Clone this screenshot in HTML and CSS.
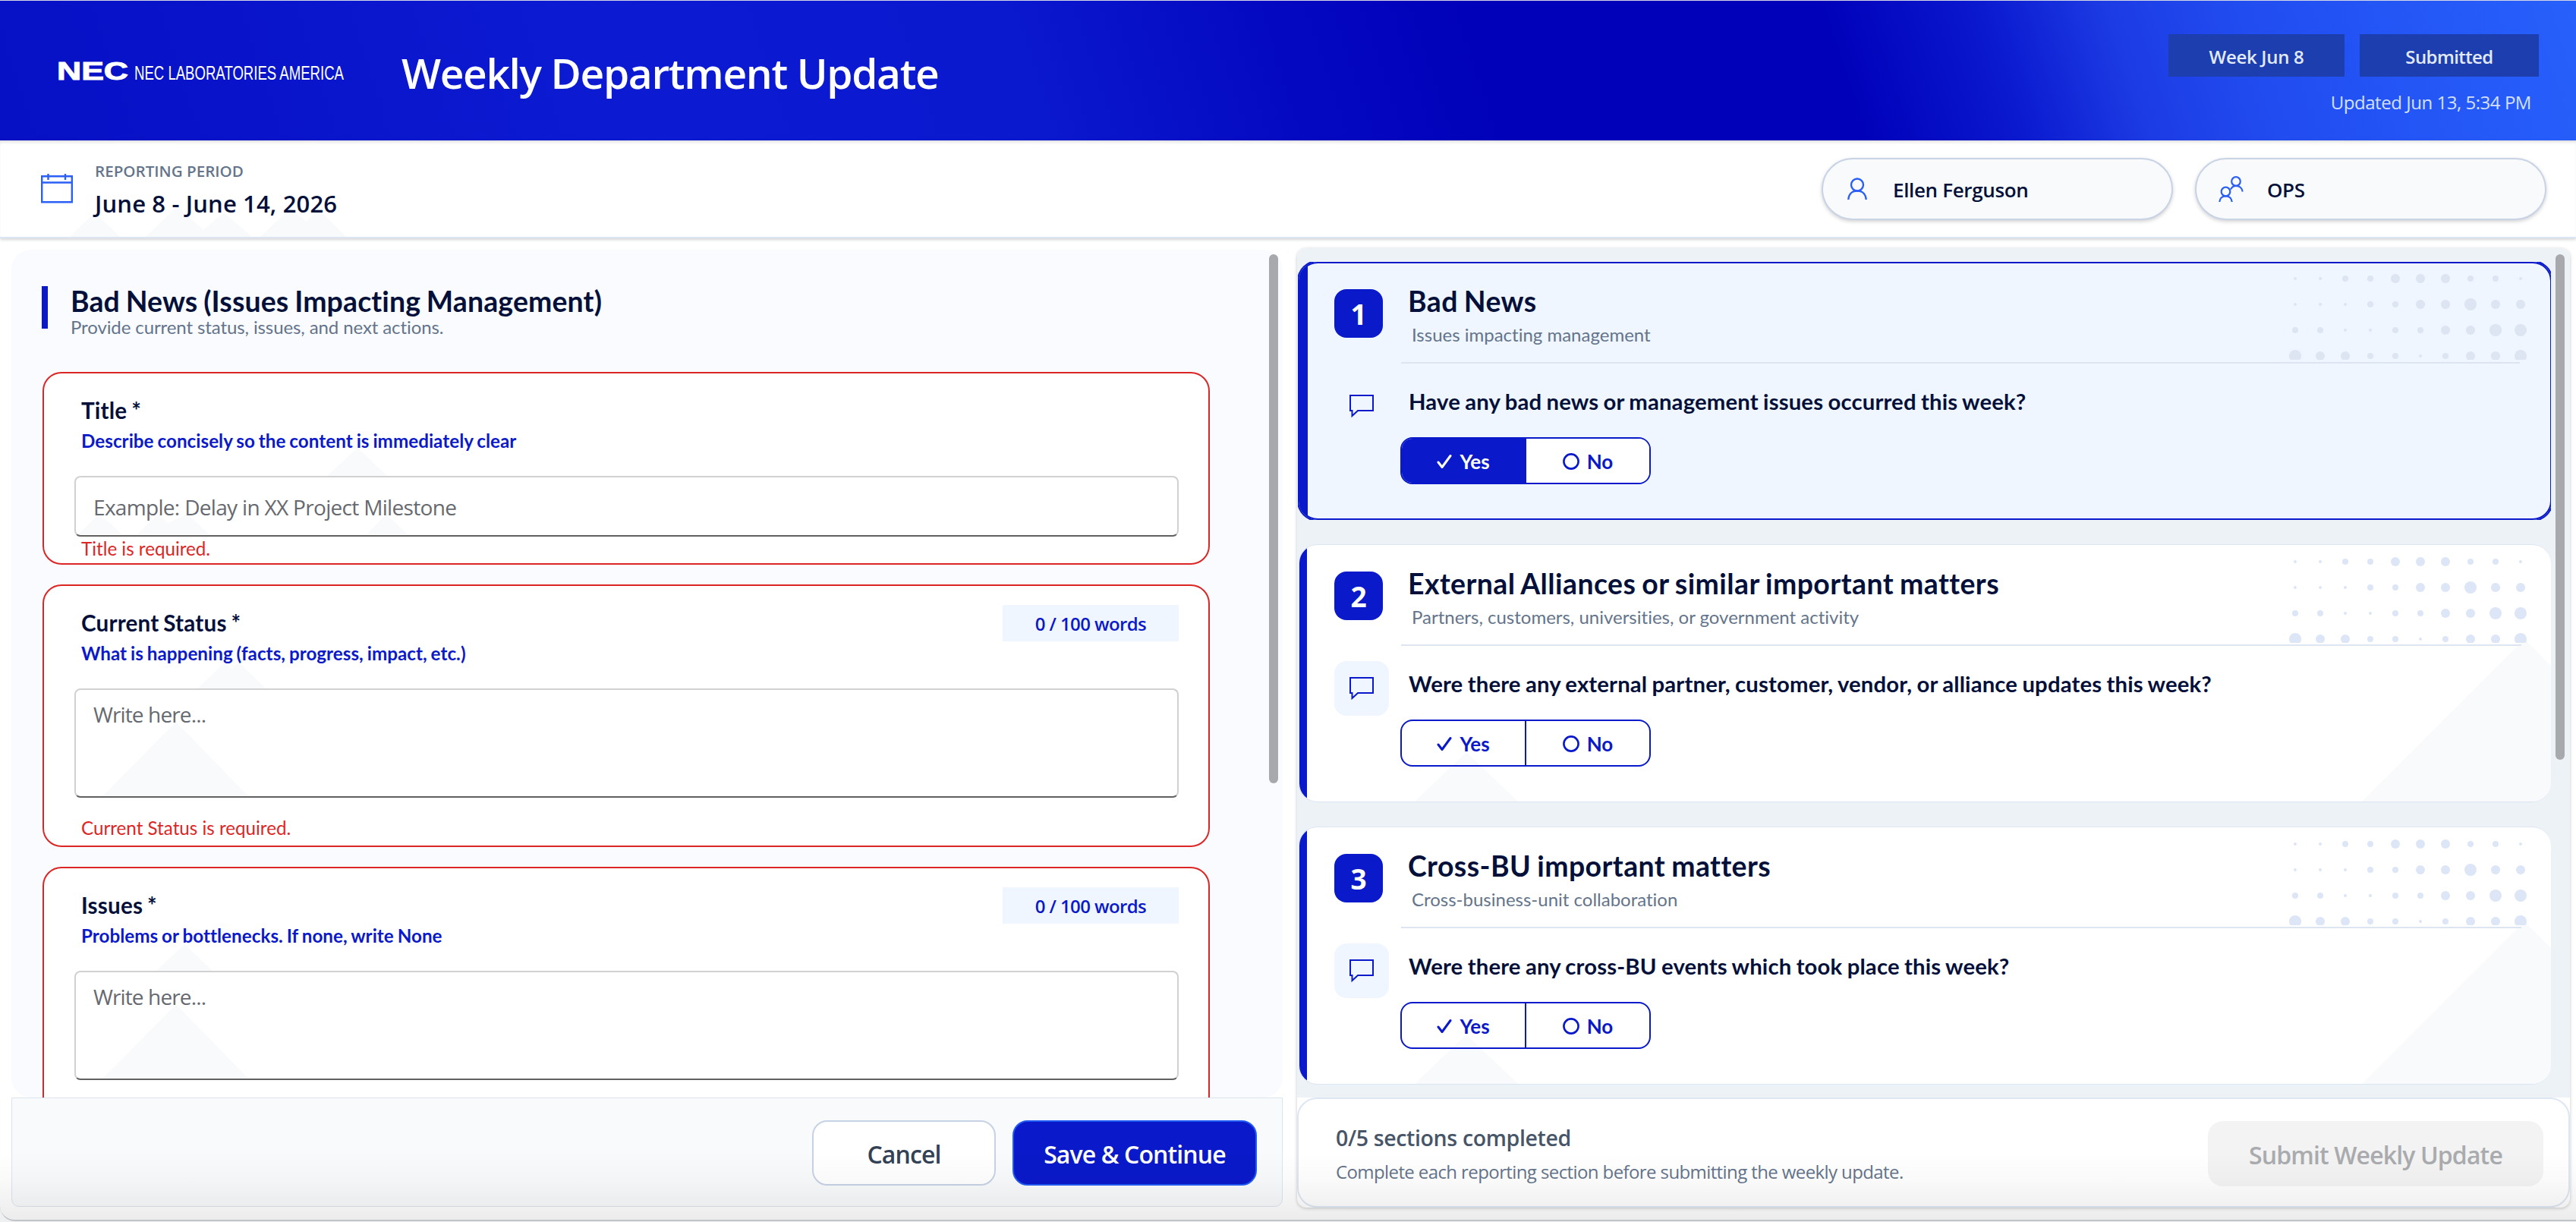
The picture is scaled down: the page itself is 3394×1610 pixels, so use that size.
FILE: index.html
```html
<!DOCTYPE html>
<html lang="en">
<head>
  <meta charset="UTF-8" />
  <meta name="viewport" content="width=device-width, initial-scale=1.0"/>
  <title>Weekly Department Update</title>
  <link rel="stylesheet" href="styles.css">
</head>
<body>

  <!-- Shared icons -->
  <svg class="sprite" width="0" height="0">
    <symbol id="i-chat" viewBox="0 0 32 30">
      <path d="M1 1H31V21H11L3.5 28V21H1Z" fill="none" stroke="currentColor" stroke-width="2"/>
    </symbol>
    <symbol id="i-check" viewBox="0 0 20 20">
      <path d="M2 11L7 17.5L18 2.5" fill="none" stroke="currentColor" stroke-width="3" stroke-linecap="round" stroke-linejoin="round"/>
    </symbol>
    <symbol id="i-circle" viewBox="0 0 22 22">
      <circle cx="11" cy="11" r="9.6" fill="none" stroke="currentColor" stroke-width="2.6"/>
    </symbol>
    <symbol id="i-dots" viewBox="0 0 340 129">
      <g fill="currentColor">
        <circle cx="24" cy="22" r="2"/><circle cx="57" cy="22" r="2"/><circle cx="90" cy="22" r="4"/><circle cx="123" cy="22" r="4"/><circle cx="156" cy="22" r="6"/><circle cx="189" cy="22" r="6"/><circle cx="222" cy="22" r="6"/><circle cx="255" cy="22" r="4"/><circle cx="288" cy="22" r="4"/><circle cx="321" cy="22" r="2"/>
        <circle cx="24" cy="56" r="2"/><circle cx="57" cy="56" r="2"/><circle cx="90" cy="56" r="2"/><circle cx="123" cy="56" r="4"/><circle cx="156" cy="56" r="4"/><circle cx="189" cy="56" r="6"/><circle cx="222" cy="56" r="6"/><circle cx="255" cy="56" r="8"/><circle cx="288" cy="56" r="6"/><circle cx="321" cy="56" r="6"/>
        <circle cx="24" cy="90" r="4"/><circle cx="57" cy="90" r="4"/><circle cx="90" cy="90" r="2"/><circle cx="123" cy="90" r="2"/><circle cx="156" cy="90" r="4"/><circle cx="189" cy="90" r="4"/><circle cx="222" cy="90" r="6"/><circle cx="255" cy="90" r="6"/><circle cx="288" cy="90" r="8"/><circle cx="321" cy="90" r="8"/>
        <circle cx="24" cy="124" r="8"/><circle cx="57" cy="124" r="6"/><circle cx="90" cy="124" r="6"/><circle cx="123" cy="124" r="4"/><circle cx="156" cy="124" r="4"/><circle cx="189" cy="124" r="2"/><circle cx="222" cy="124" r="4"/><circle cx="255" cy="124" r="6"/><circle cx="288" cy="124" r="6"/><circle cx="321" cy="124" r="8"/>
      </g>
    </symbol>
  </svg>

  <div class="app">
    <header class="hero">
      <svg class="logo" width="380" height="40" viewBox="0 0 380 40">
        <text class="logo-mark" x="0" y="31" textLength="94" lengthAdjust="spacingAndGlyphs">NEC</text>
        <text class="logo-name" x="102" y="31" textLength="276" lengthAdjust="spacingAndGlyphs">NEC LABORATORIES AMERICA</text>
      </svg>
      <h1>Weekly Department Update</h1>
      <div class="hero-status">
        <div class="pills">
          <span class="pill">Week Jun 8</span>
          <span class="pill pill-wide">Submitted</span>
        </div>
        <div class="updated">Updated Jun 13, 5:34 PM</div>
      </div>
    </header>

    <section class="period">
      <svg class="peaks" width="460" height="127" viewBox="0 0 460 127">
        <path d="M92 127L125 95L158 127ZM192 127L233 87L268 118L295 95L332 127ZM343 127L383 89L403 107L421 92L456 127Z"/>
      </svg>
      <svg class="calendar" width="42" height="40" viewBox="0 0 42 40" fill="none" stroke="currentColor" stroke-width="2.4">
        <path d="M1.2 4.2H40.8V38.2H1.2ZM1.2 12.5H40.8M9.5 1V9M32 1V9"/>
      </svg>
      <div class="period-text">
        <div class="period-label">REPORTING PERIOD</div>
        <div class="period-dates">June 8 - June 14, 2026</div>
      </div>
      <div class="chips">
        <div class="chip">
          <svg width="26" height="30" viewBox="0 0 26 30" fill="none" stroke="currentColor" stroke-width="2.4">
            <circle cx="13" cy="9.5" r="8"/><path d="M1.3 29C1.8 22 6 17.5 13 17.5S24.2 22 24.7 29"/>
          </svg>
          <span>Ellen Ferguson</span>
        </div>
        <div class="chip chip-dept">
          <svg width="33" height="34" viewBox="0 0 33 34" fill="none" stroke="currentColor" stroke-width="2.2">
            <circle cx="23" cy="7" r="5.8"/><path d="M16 17.5C17.5 14.5 20 12.8 23 12.8C28 12.8 31.2 16 31.6 20.5"/>
            <circle cx="9.5" cy="20.5" r="5.8"/><path d="M1.3 34C1.6 29.5 4.5 26.3 9.5 26.3S17.4 29.5 17.7 34"/>
          </svg>
          <span>OPS</span>
        </div>
      </div>
    </section>

    <main class="board">
      <!-- Section form -->
      <section class="form-panel">
        <div class="form-scroll">
          <div class="form-head">
            <div class="form-head-bar"></div>
            <div>
              <h2>Bad News (Issues Impacting Management)</h2>
              <p>Provide current status, issues, and next actions.</p>
            </div>
          </div>

          <div class="field field-short">
            <svg class="peaks" width="560" height="220" viewBox="0 0 560 220">
              <path d="M373 135L413 98L452 135ZM45 212L73 185L103 212ZM123 212L151 185L163 197L189 185L217 212ZM425 212L451 185L479 212Z"/>
            </svg>
            <div class="field-row">
              <div class="field-label">
                <label>Title *</label>
                <span class="hint">Describe concisely so the content is immediately clear</span>
              </div>
            </div>
            <input type="text" placeholder="Example: Delay in XX Project Milestone">
            <div class="error">Title is required.</div>
          </div>

          <div class="field">
            <svg class="peaks" width="560" height="330" viewBox="0 0 560 330">
              <path d="M202 135L238 101L247 109L257 101L292 135ZM75 279L174 179L271 279Z"/>
            </svg>
            <div class="field-row">
              <div class="field-label">
                <label>Current Status *</label>
                <span class="hint">What is happening (facts, progress, impact, etc.)</span>
              </div>
              <span class="count">0 / 100 words</span>
            </div>
            <textarea placeholder="Write here..."></textarea>
            <div class="error">Current Status is required.</div>
          </div>

          <div class="field">
            <svg class="peaks" width="560" height="330" viewBox="0 0 560 330">
              <path d="M148 135L185 100L222 135ZM75 279L174 179L271 279Z"/>
            </svg>
            <div class="field-row">
              <div class="field-label">
                <label>Issues *</label>
                <span class="hint">Problems or bottlenecks. If none, write None</span>
              </div>
              <span class="count">0 / 100 words</span>
            </div>
            <textarea placeholder="Write here..."></textarea>
          </div>
          <div class="thumb thumb-form"></div>
        </div>

        <footer class="form-actions">
          <button class="btn btn-cancel">Cancel</button>
          <button class="btn btn-save">Save &amp; Continue</button>
        </footer>
      </section>

      <!-- Section list -->
      <section class="list-panel">
        <div class="list-scroll">
          <div class="slot">
            <article class="card active">
              <svg class="dots" width="340" height="129"><use href="#i-dots"/></svg>
              <div class="card-head">
                <div class="num">1</div>
                <div class="card-title">
                  <h3>Bad News</h3>
                  <p>Issues impacting management</p>
                </div>
              </div>
              <div class="card-body">
                <div class="tile"><svg width="32" height="30"><use href="#i-chat"/></svg></div>
                <div>
                  <div class="question">Have any bad news or management issues occurred this week?</div>
                  <div class="toggle">
                    <span class="opt on"><svg width="20" height="20"><use href="#i-check"/></svg>Yes</span>
                    <span class="opt"><svg width="22" height="22"><use href="#i-circle"/></svg>No</span>
                  </div>
                </div>
              </div>
            </article>
          </div>

          <div class="slot">
            <article class="card">
              <svg class="peaks" width="1650" height="338" viewBox="0 0 1650 338">
                <path d="M1400 338L1608 130L1617 127L1650 160V338ZM152 338L220 273L288 338Z"/>
              </svg>
              <svg class="dots" width="340" height="129"><use href="#i-dots"/></svg>
              <div class="card-head">
                <div class="num">2</div>
                <div class="card-title">
                  <h3>External Alliances or similar important matters</h3>
                  <p>Partners, customers, universities, or government activity</p>
                </div>
              </div>
              <div class="card-body">
                <div class="tile"><svg width="32" height="30"><use href="#i-chat"/></svg></div>
                <div>
                  <div class="question">Were there any external partner, customer, vendor, or alliance updates this week?</div>
                  <div class="toggle">
                    <span class="opt"><svg width="20" height="20"><use href="#i-check"/></svg>Yes</span>
                    <span class="opt"><svg width="22" height="22"><use href="#i-circle"/></svg>No</span>
                  </div>
                </div>
              </div>
            </article>
          </div>

          <div class="slot">
            <article class="card">
              <svg class="peaks" width="1650" height="338" viewBox="0 0 1650 338">
                <path d="M1400 338L1608 130L1617 127L1650 160V338ZM152 338L220 273L288 338Z"/>
              </svg>
              <svg class="dots" width="340" height="129"><use href="#i-dots"/></svg>
              <div class="card-head">
                <div class="num">3</div>
                <div class="card-title">
                  <h3>Cross-BU important matters</h3>
                  <p>Cross-business-unit collaboration</p>
                </div>
              </div>
              <div class="card-body">
                <div class="tile"><svg width="32" height="30"><use href="#i-chat"/></svg></div>
                <div>
                  <div class="question">Were there any cross-BU events which took place this week?</div>
                  <div class="toggle">
                    <span class="opt"><svg width="20" height="20"><use href="#i-check"/></svg>Yes</span>
                    <span class="opt"><svg width="22" height="22"><use href="#i-circle"/></svg>No</span>
                  </div>
                </div>
              </div>
            </article>
          </div>
          <div class="thumb thumb-list"></div>
        </div>

        <footer class="submit-bar">
          <div>
            <div class="progress">0/5 sections completed</div>
            <div class="progress-note">Complete each reporting section before submitting the weekly update.</div>
          </div>
          <button class="btn btn-submit" disabled>Submit Weekly Update</button>
        </footer>
      </section>
    </main>
    <div class="shade"></div>
  </div>

</body>
</html>
```
FILE: styles.css
```css
:root {
  --blue: #0a19c9;
  --blue-light: #2b5ff5;
  --ink: #03103a;
  --muted: #64748b;
  --line: #dde5f3;
  --red: #dc2626;
  --tint: #eff6ff;
}

* {
  box-sizing: border-box;
}

body {
  margin: 0;
  background: #eff0f1;
  font-family: "Open Sans", "Noto Sans", sans-serif;
  color: var(--ink);
  font-variant-ligatures: none;
}

h1, h2, h3, p {
  margin: 0;
}

svg {
  display: block;
  flex: none;
}

.sprite {
  position: absolute;
}

.app {
  position: relative;
  display: flex;
  flex-direction: column;
  width: 3394px;
  height: 1609px;
  overflow: hidden;
  background: #fff;
  border-top: 1px solid #d3d6e4;
  border-bottom: 2px solid #c0c4c9;
  border-radius: 0 0 0 20px;
}

/* Header */
.hero {
  display: flex;
  flex: none;
  height: 184px;
  padding: 0 49px 0 75px;
  color: #fff;
  background: linear-gradient(72deg, #0610c5 0%, #0914ca 10%, #0c1bd2 25%, #0a18ce 40%, #0409c1 50%, #0001b9 58%, #0001b9 71%, #0a18ce 77%, #1c3be4 82%, #214cf0 87%, #2456f6 93%, #2760fb 100%);
}

.logo {
  margin-top: 73px;
  overflow: visible;
  fill: #fff;
}

.logo-mark {
  font: 700 33px "Liberation Sans", sans-serif;
  stroke: #fff;
  stroke-width: 1;
}

.logo-name {
  font: 400 26px "Liberation Sans", sans-serif;
}

h1 {
  margin: 55px 0 0 74px;
  font-size: 55px;
  font-weight: 600;
  line-height: 80px;
  letter-spacing: -1.33px;
}

.hero-status {
  margin: 44px 0 0 auto;
}

.pills {
  display: flex;
  gap: 20px;
}

.pill {
  width: 232px;
  height: 56px;
  background: #1c3eae;
  color: #e3eafd;
  font-size: 24px;
  font-weight: 600;
  line-height: 59px;
  letter-spacing: -0.3px;
  text-align: center;
}

.pill-wide {
  width: 236px;
  letter-spacing: -0.6px;
}

.updated {
  margin-top: 18px;
  padding-right: 10px;
  color: #d5e0fb;
  font-size: 24px;
  line-height: 32px;
  letter-spacing: -0.46px;
  text-align: right;
}

.period {
  position: relative;
  z-index: 0;
  display: flex;
  flex: none;
  height: 129px;
  padding: 0 39px 0 54px;
  border-bottom: 2px solid #dbe5f3;
  box-shadow: 0 2px 4px rgba(0,0,0,0.16), inset 0 4px 4px -2px rgba(0,0,0,0.14);
}

.peaks {
  position: absolute;
  left: 0;
  top: 0;
  z-index: -1;
  fill: #f8fafc;
}

.calendar {
  margin-top: 43px;
  color: var(--blue-light);
}

.period-text {
  margin: 25px 0 0 28px;
}

.period-label {
  padding-left: 1px;
  color: var(--muted);
  font-size: 20.6px;
  font-weight: 600;
  line-height: 30px;
}

.period-dates {
  margin-top: 10px;
  padding-left: 1px;
  font-size: 31px;
  font-weight: 600;
  line-height: 36px;
  letter-spacing: 0.15px;
}

.chips {
  display: flex;
  gap: 29px;
  margin: 23px 0 0 auto;
}

.chip {
  display: flex;
  align-items: center;
  gap: 34px;
  width: 463px;
  height: 82px;
  padding-left: 32px;
  border: 2px solid #c8d3e6;
  border-radius: 41px;
  background: #f9fafc;
  box-shadow: 0 2px 5px rgba(0,0,0,0.18);
  font-size: 26px;
  font-weight: 600;
  letter-spacing: -0.35px;
}

.chip span {
  padding-top: 2px;
}

.chip svg {
  color: var(--blue-light);
}

.chip-dept {
  gap: 31px;
  padding-left: 29px;
}

/* Two column board */
.board {
  display: flex;
  flex: 1;
  align-items: flex-start;
  gap: 19px;
  padding: 13px 8px 0 15px;
}

.form-panel {
  width: 1675px;
  margin-top: 2px;
}

.form-scroll {
  position: relative;
  height: 1117px;
  padding: 46px 0 0 40px;
  overflow: hidden;
  border-radius: 26px;
  background: #fafbff;
}

.form-head {
  display: flex;
  gap: 30px;
  margin-bottom: 47px;
}

.form-head-bar {
  width: 8px;
  height: 56px;
  margin-top: 2px;
  background: var(--blue);
}

h2,
h3 {
  font-family: Lato, sans-serif;
  font-size: 37.4px;
  font-weight: 700;
  line-height: 44px;
  letter-spacing: 0.15px;
  word-spacing: -1.5px;
}

h3 {
  letter-spacing: 0.43px;
}

.form-head p {
  color: var(--muted);
  font-family: Lato, sans-serif;
  font-size: 24px;
  line-height: 24px;
  letter-spacing: -0.1px;
}

.field {
  position: relative;
  z-index: 0;
  width: 1538px;
  height: 346px;
  margin: 0 0 26px 1px;
  padding: 31px 39px 0 40px;
  border: 2px solid var(--red);
  border-radius: 25px;
  background: #fff;
  font-family: Lato, sans-serif;
}

.field-short {
  height: 254px;
}

.field-row {
  display: flex;
  justify-content: space-between;
  align-items: flex-start;
}

.field-label {
  display: flex;
  flex-direction: column;
  gap: 6px;
  padding-left: 9px;
}

.field-label label {
  font-size: 29.6px;
  font-weight: 700;
  line-height: 36px;
  letter-spacing: 0.2px;
  word-spacing: -1.5px;
}

.hint {
  color: var(--blue);
  font-size: 24.2px;
  font-weight: 700;
  line-height: 32px;
  letter-spacing: 0.04px;
  word-spacing: -1px;
}

.count {
  width: 232px;
  height: 48px;
  margin-top: -6px;
  background: var(--tint);
  color: var(--blue);
  font-family: "Open Sans", sans-serif;
  font-size: 24px;
  font-weight: 600;
  line-height: 50px;
  letter-spacing: -0.6px;
  text-align: center;
}

input,
textarea {
  display: block;
  width: 100%;
  height: 80px;
  margin: 30px 0 0;
  padding: 2px 22px 0 23px;
  border: 2px solid #d1d1d1;
  border-bottom-color: #616161;
  border-radius: 8px;
  background: transparent;
  font-family: "Open Sans", sans-serif;
  font-size: 28px;
  line-height: 36px;
  letter-spacing: -0.68px;
  resize: none;
}

textarea {
  height: 144px;
  padding-top: 14px;
  letter-spacing: -0.87px;
}

::placeholder {
  color: #66696f;
}

.error {
  margin-top: 24px;
  padding-left: 9px;
  color: var(--red);
  font-size: 24.2px;
  line-height: 32px;
}

.field-short .error {
  margin-top: 0;
}

.thumb {
  position: absolute;
  width: 12px;
  border-radius: 6px;
  background: #a7a9ac;
}

.thumb-form {
  left: 1657px;
  top: 6px;
  height: 697px;
}

.thumb-list {
  left: 1658px;
  top: 8px;
  height: 666px;
}

.form-actions {
  display: flex;
  justify-content: flex-end;
  gap: 22px;
  height: 144px;
  padding: 29px 33px 0 0;
  border: 1px solid #dbe5ef;
  border-radius: 0 0 10px 10px;
  background: #f8fafc;
}

.btn {
  height: 86px;
  padding: 2px 0 0;
  border: 2px solid;
  border-radius: 20px;
  font-family: "Open Sans", sans-serif;
  font-size: 32px;
  font-weight: 600;
  letter-spacing: -0.87px;
}

.btn-cancel {
  width: 242px;
  border-color: #c7d2e5;
  background: #fff;
  color: #334155;
}

.btn-save {
  width: 322px;
  border-color: #2159f3;
  background: var(--blue);
  color: #fff;
}

.list-panel {
  width: 1677px;
  height: 1264px;
  overflow: hidden;
  border-radius: 12px;
  background: #fff;
  box-shadow: 0 1px 4px rgba(0,0,0,0.22);
}

.list-scroll {
  position: relative;
  height: 1119px;
  padding: 18px 0 0 1px;
  overflow: hidden;
  background: #edf2f6;
}

/* Each slot clips the focus ring of its card */
.slot {
  width: 1651px;
  height: 340px;
  margin-bottom: 32px;
  overflow: hidden;
}

.card {
  position: relative;
  z-index: 0;
  height: 340px;
  margin-left: 1px;
  overflow: hidden;
  border: 1px solid var(--line);
  border-right-width: 0;
  border-radius: 25px;
  background: linear-gradient(90deg, var(--blue) 10px, #fff 10px);
}

.card.active {
  margin-right: -1px;
  overflow: visible;
  border: 2px solid var(--blue);
  background: linear-gradient(90deg, var(--blue) 10px, var(--tint) 10px);
  box-shadow: 0 0 0 2px var(--blue);
}

.dots {
  position: absolute;
  top: 0;
  right: 21px;
  color: #dce6f6;
}

.active .dots {
  right: 20px;
  top: -2px;
  color: #dde4f2;
}

.card-head {
  display: flex;
  padding: 0 39px 0 46px;
}

.num {
  width: 64px;
  height: 64px;
  margin: 35px 24px 0 0;
  border-radius: 16px;
  background: var(--blue);
  color: #fff;
  font-size: 37px;
  font-weight: 700;
  line-height: 66px;
  text-align: center;
}

.card-title {
  flex: 1;
  height: 133px;
  padding: 29px 0 0 9px;
  border-bottom: 2px solid var(--line);
}

.card-title p {
  margin: 6px 0 0 5px;
  color: var(--muted);
  font-family: Lato, sans-serif;
  font-size: 24px;
  line-height: 32px;
}

.card-body {
  display: flex;
  gap: 15px;
  padding-left: 46px;
}

.tile {
  display: flex;
  justify-content: center;
  width: 72px;
  height: 72px;
  margin-top: 20px;
  padding: 21px 0 0 0;
  border-radius: 16px;
  background: var(--tint);
  color: var(--blue);
}

.question {
  margin-top: 30px;
  padding-left: 11px;
  font-family: Lato, sans-serif;
  font-size: 29.3px;
  font-weight: 700;
  line-height: 40px;
  letter-spacing: 0.15px;
  word-spacing: -1px;
}

.toggle {
  display: flex;
  width: 330px;
  height: 62px;
  margin-top: 27px;
  overflow: hidden;
  border: 2px solid var(--blue);
  border-radius: 16px;
}

.opt {
  display: flex;
  flex: 1;
  align-items: center;
  justify-content: center;
  gap: 10px;
  padding-top: 1px;
  color: var(--blue);
  font-family: Lato, sans-serif;
  font-size: 26px;
  font-weight: 700;
}

.opt:last-child {
  border-left: 2px solid var(--blue);
}

.active .opt {
  background: #fff;
}

.active .opt.on {
  background: var(--blue);
  color: #fff;
}

.active .card-head,
.active .card-body {
  position: relative;
  top: -1px;
  left: -1px;
}

.submit-bar {
  display: flex;
  justify-content: space-between;
  height: 145px;
  padding: 29px 33px 0 49px;
  border: 2px solid #dde6f2;
  border-radius: 26px;
  background: #fff;
}

.progress {
  margin-top: 4px;
  color: #475569;
  font-size: 28.5px;
  font-weight: 600;
  line-height: 36px;
  letter-spacing: -0.36px;
}

.progress-note {
  margin-top: 11px;
  color: var(--muted);
  font-size: 24px;
  line-height: 32px;
  letter-spacing: -0.6px;
}

.btn-submit {
  width: 442px;
  border: none;
  background: #f3f3f3;
  color: #a9abae;
}

/* Soft darkening along the window's lower edge */
.shade {
  position: absolute;
  left: 0;
  right: 0;
  bottom: 0;
  height: 90px;
  background: linear-gradient(transparent, rgba(0,0,0,0.02) 40%, rgba(0,0,0,0.075));
  pointer-events: none;
}
```
